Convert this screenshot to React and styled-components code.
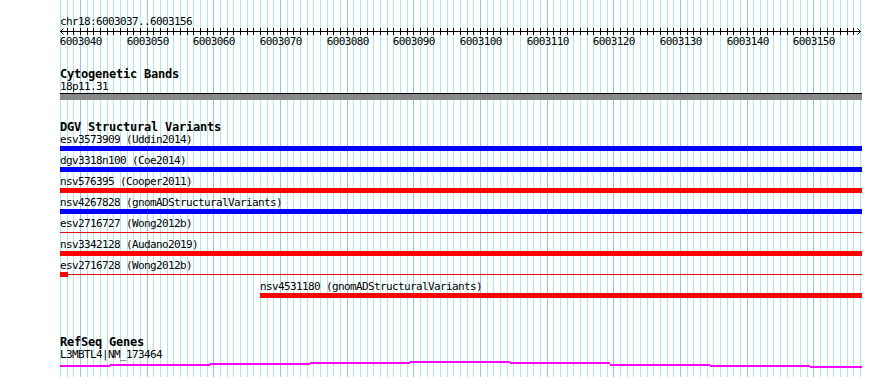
import styled, { createGlobalStyle } from "styled-components";

const GlobalStyle = createGlobalStyle`
  html, body {
    margin: 0;
    padding: 0;
    background: #fff;
  }
  body {
    overflow: hidden;
  }
`;

// view: chr18:6003037..6003156, 120 bp over 800 px
const VIEW_START = 6003037;
const BP_COUNT = 120;
const PX_PER_BP = 800 / BP_COUNT;
const LEFT = 60;

const bpX = (k) => k * PX_PER_BP;

const variants = [
  { name: "esv3573909 (Uddin2014)", color: "#0000ff", start: 0 },
  { name: "dgv3318n100 (Coe2014)", color: "#0000ff", start: 0 },
  { name: "nsv576395 (Cooper2011)", color: "#ff0000", start: 0 },
  { name: "nsv4267828 (gnomADStructuralVariants)", color: "#0000ff", start: 0 },
  { name: "esv2716727 (Wong2012b)", color: "#ff0000", start: 0, thin: true },
  { name: "nsv3342128 (Audano2019)", color: "#ff0000", start: 0 },
  { name: "esv2716728 (Wong2012b)", color: "#ff0000", start: 0, thin: true, block: 8 },
  { name: "nsv4531180 (gnomADStructuralVariants)", color: "#ff0000", start: 30 },
];

// intron line of the gene, drawn a bit wavy like the original
const geneSegments = [
  [60, 110, 5], [110, 210, 4], [210, 310, 3], [310, 410, 2], [410, 510, 1],
  [510, 610, 2], [610, 710, 4], [710, 810, 5], [810, 862, 6],
];

const Page = styled.div`
  display: grid;
  width: 890px;
  height: 377px;
  overflow: hidden;
  background: #fff;
  color: #000;
  font-family: "DejaVu Sans Mono", "Liberation Mono", monospace;

  > * {
    grid-area: 1 / 1;
  }
`;

const GridSvg = styled.svg`
  display: block;
`;

const Tracks = styled.div`
  display: flex;
  flex-direction: column;
  width: 802px;
  padding-left: ${LEFT}px;
`;

const Section = styled.section`
  display: flex;
  flex-direction: column;
  margin-top: ${(p) => p.$top}px;
`;

const TrackTitle = styled.div`
  font-size: 12px;
  font-weight: bold;
  letter-spacing: -0.22px;
  line-height: 14px;
  height: 14px;
  white-space: nowrap;
`;

const Label = styled.div`
  position: relative;
  z-index: 1;
  font-size: 11px;
  letter-spacing: -0.62px;
  line-height: 11px;
  height: 11px;
  white-space: nowrap;
  overflow: visible;
`;

const RulerSvg = styled.svg`
  display: block;
  font-size: 11px;
  letter-spacing: -0.62px;
`;

const Band = styled.div`
  margin-top: 1px;
  height: 6px;
  border-top: 1px solid #000;
  background: #888888;
`;

const FeatureRow = styled.div`
  display: flex;
  flex-direction: column;
  height: 21px;
`;

const Glyph = styled.div`
  display: flex;
  align-items: flex-start;
  margin-top: 1px;
  height: 5px;
`;

const Bar = styled.div`
  height: 5px;
  flex: 1;
  background: ${(p) => p.$color};
`;

const Block = styled.div`
  height: 5px;
  flex: none;
  background: ${(p) => p.$color};
`;

const Thin = styled.div`
  flex: 1;
  height: 1px;
  margin-top: 2px;
  background: #e01010;
`;

const GeneSvg = styled.svg`
  display: block;
`;

function GridLines() {
  const lines = [];
  for (let k = 0; k <= BP_COUNT; k++) {
    const x = Math.round(LEFT + bpX(k)) + 0.5;
    const major = (VIEW_START + k) % 10 === 0;
    lines.push(
      <line key={k} x1={x} x2={x} y1={0} y2={377} stroke={major ? "#8cc6ea" : "#aae8ee"} strokeWidth="1" />
    );
  }
  return (
    <GridSvg width="890" height="377">
      {lines}
    </GridSvg>
  );
}

function Ruler() {
  const ticks = [];
  const labels = [];
  for (let k = 1; k < BP_COUNT; k++) {
    const x = Math.round(bpX(k)) + 0.5;
    ticks.push(<line key={k} x1={x} x2={x} y1={1} y2={8} stroke="#000" />);
    if ((VIEW_START + k) % 10 === 0) {
      labels.push(
        <text key={k} x={x + 0.3} y={18} textAnchor="middle" fill="#000">
          {VIEW_START + k}
        </text>
      );
    }
  }
  return (
    <RulerSvg width="802" height="20">
      <line x1="0" x2="801" y1="4.5" y2="4.5" stroke="#000" />
      <polyline points="3.5,1.5 0.5,4.5 3.5,7.5" fill="none" stroke="#000" />
      <polyline points="797.5,1.5 800.5,4.5 797.5,7.5" fill="none" stroke="#000" />
      {ticks}
      {labels}
    </RulerSvg>
  );
}

function Variant({ v }) {
  const left = bpX(v.start);
  return (
    <FeatureRow>
      <Label style={{ marginLeft: left }}>{v.name}</Label>
      <Glyph style={{ marginLeft: left }}>
        {v.block && <Block $color={v.color} style={{ width: v.block }} />}
        {v.thin ? <Thin /> : <Bar $color={v.color} />}
      </Glyph>
    </FeatureRow>
  );
}

export default function App() {
  return (
    <>
      <GlobalStyle />
      <Page>
        <GridLines />
        <Tracks>
          <Section $top={16}>
            <Label>chr18:6003037..6003156</Label>
            <Ruler />
          </Section>

          <Section $top={20}>
            <TrackTitle>Cytogenetic Bands</TrackTitle>
            <Label>18p11.31</Label>
            <Band />
          </Section>

          <Section $top={20}>
            <TrackTitle>DGV Structural Variants</TrackTitle>
            {variants.map((v) => (
              <Variant key={v.name} v={v} />
            ))}
          </Section>

          <Section $top={33}>
            <TrackTitle>RefSeq Genes</TrackTitle>
            <Label>L3MBTL4|NM_173464</Label>
            <GeneSvg width="802" height="9">
              {geneSegments.map(([a, b, y]) => (
                <rect key={a} x={a - LEFT} y={y} width={b - a} height="2" fill="#ff00ff" />
              ))}
            </GeneSvg>
          </Section>
        </Tracks>
      </Page>
    </>
  );
}
